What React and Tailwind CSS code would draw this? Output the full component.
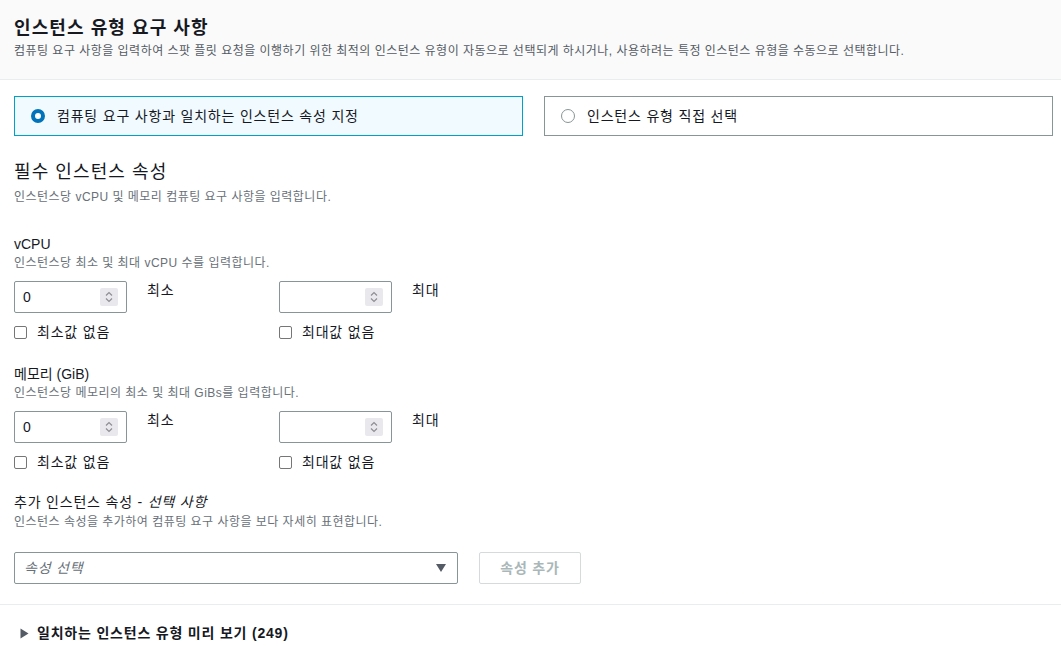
import React from 'react';

const font = { fontFamily: '"Liberation Sans", "Noto Sans CJK KR", sans-serif' };

const Spinner = () => (
  <div className="w-[18px] h-[18px] bg-[#e9e9ed] rounded-[2px] flex items-center justify-center">
    <svg width="10" height="14" viewBox="0 0 10 14" fill="none" stroke="#8d8d94" strokeWidth="1.2">
      <path d="M2 5.5 L5 2.5 L8 5.5" />
      <path d="M2 8.5 L5 11.5 L8 8.5" />
    </svg>
  </div>
);

const NumberField = ({ value, label }) => (
  <div className="w-[265px] flex items-start">
    <div className="w-[113px] h-[32px] border border-[#879596] rounded-[2px] flex items-center justify-between pl-[8px] pr-[8px]">
      <span className="text-[14px] text-[#16191f]">{value}</span>
      <Spinner />
    </div>
    <span className="ml-[20px] text-[14px] leading-[18px] text-[#16191f]">{label}</span>
  </div>
);

const Check = ({ label }) => (
  <label className="w-[265px] h-[20px] flex items-center gap-[10px] text-[14px] text-[#16191f]">
    <span className="w-[13px] h-[13px] border border-[#767676] rounded-[2px] bg-white" />
    {label}
  </label>
);

const RangeGroup = ({ title, desc }) => (
  <div>
    <div className="text-[14px] text-[#16191f] leading-[20px] tracking-normal">{title}</div>
    <div className="mt-[1px] text-[12px] text-[#687078] leading-[16px] tracking-[0.04em]">{desc}</div>
    <div className="flex mt-[10px]">
      <NumberField value="0" label="최소" />
      <NumberField value="" label="최대" />
    </div>
    <div className="flex mt-[9px]">
      <Check label="최소값 없음" />
      <Check label="최대값 없음" />
    </div>
  </div>
);

export default function App() {
  return (
    <div style={font} className="w-[1061px] h-[646px] bg-white overflow-hidden tracking-[0.05em]">
      {/* Header */}
      <div className="bg-[#fafafa] border-b border-[#eaeded] h-[80px] px-[14px] pt-[16px]">
        <h2 className="text-[18px] font-bold text-[#16191f] leading-[24px] tracking-[0.06em]">인스턴스 유형 요구 사항</h2>
        <p className="mt-[1px] text-[12px] text-[#545b64] leading-[20px] tracking-[0.04em]">
          컴퓨팅 요구 사항을 입력하여 스팟 플릿 요청을 이행하기 위한 최적의 인스턴스 유형이 자동으로 선택되게 하시거나, 사용하려는 특정 인스턴스 유형을 수동으로 선택합니다.
        </p>
      </div>

      <div className="pl-[14px] pr-[8px] pt-[16px]">
        {/* Radio cards */}
        <div className="grid grid-cols-2 gap-[21px]">
          <div className="h-[40px] border border-[#00a1c9] bg-[#f1faff] flex items-center pl-[16px]">
            <span className="w-[14px] h-[14px] rounded-full border-[4px] border-[#0073bb] bg-white" />
            <span className="ml-[12px] text-[14px] text-[#16191f]">컴퓨팅 요구 사항과 일치하는 인스턴스 속성 지정</span>
          </div>
          <div className="h-[40px] border border-[#879596] bg-white flex items-center pl-[16px]">
            <span className="w-[14px] h-[14px] rounded-full border border-[#879596] bg-white" />
            <span className="ml-[12px] text-[14px] text-[#16191f]">인스턴스 유형 직접 선택</span>
          </div>
        </div>

        {/* Required attributes */}
        <div className="mt-[24px]">
          <h3 className="text-[18px] text-[#16191f] leading-[24px] tracking-[0.06em]">필수 인스턴스 속성</h3>
          <div className="text-[12px] text-[#687078] leading-[16px] mt-[5px] tracking-[0.04em]">인스턴스당 vCPU 및 메모리 컴퓨팅 요구 사항을 입력합니다.</div>
        </div>

        <div className="mt-[29px]">
          <RangeGroup title="vCPU" desc="인스턴스당 최소 및 최대 vCPU 수를 입력합니다." />
        </div>
        <div className="mt-[22px]">
          <RangeGroup title="메모리 (GiB)" desc="인스턴스당 메모리의 최소 및 최대 GiBs를 입력합니다." />
        </div>

        {/* Additional */}
        <div className="mt-[20px]">
          <div className="text-[14px] text-[#16191f] leading-[20px]">
            추가 인스턴스 속성 - <i>선택 사항</i>
          </div>
          <div className="mt-[2px] text-[12px] text-[#687078] leading-[16px] tracking-[0.04em]">인스턴스 속성을 추가하여 컴퓨팅 요구 사항을 보다 자세히 표현합니다.</div>
          <div className="flex items-center mt-[22px] gap-[21px]">
            <div className="w-[444px] h-[32px] border border-[#879596] rounded-[2px] flex items-center justify-between pl-[9px] pr-[10px]">
              <span className="text-[14px] italic text-[#687078]">속성 선택</span>
              <svg width="12" height="10" viewBox="0 0 12 10">
                <path d="M1 1 L11 1 L6 9 Z" fill="#545b64" />
              </svg>
            </div>
            <button className="w-[102px] h-[32px] border border-[#d5dbdb] rounded-[2px] text-[14px] font-bold text-[#aab7b8] bg-white">
              속성 추가
            </button>
          </div>
        </div>
      </div>

      <div className="border-t border-[#eaeded] mt-[20px] pl-[20px] pt-[18px] flex items-center">
        <svg width="9" height="11" viewBox="0 0 9 11">
          <path d="M0.5 0.5 L8.5 5.5 L0.5 10.5 Z" fill="#545b64" />
        </svg>
        <span className="ml-[8px] text-[14px] font-bold text-[#16191f] leading-[20px]">
          일치하는 인스턴스 유형 미리 보기 (249)
        </span>
      </div>
    </div>
  );
}
